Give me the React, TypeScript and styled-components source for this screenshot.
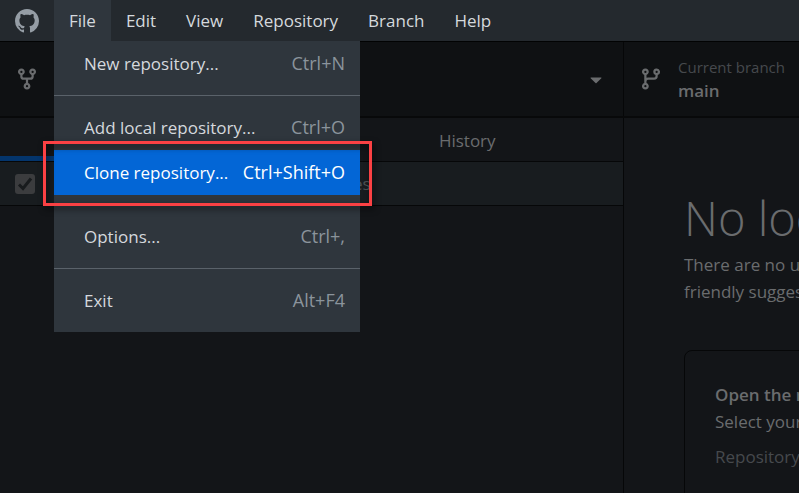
import React from "react";
import styled, { createGlobalStyle } from "styled-components";

const GlobalStyle = createGlobalStyle`
  *, *::before, *::after { box-sizing: border-box; }
  html, body, #root { height: 100%; margin: 0; }
  body {
    background: #131518;
    color: #6a6c6e;
    font: 17px/27px "Open Sans", "Noto Sans", sans-serif;
    overflow: hidden;
  }
  button { font: inherit; color: inherit; border: 0; padding: 0; background: none; text-align: left; }
`;

const Page = styled.div`
  height: 100%;
  display: flex;
  flex-direction: column;
`;

const MenuBar = styled.nav`
  display: flex;
  height: 41px;
  flex: none;
  background: #24292e;
  color: #d5d9dd;
`;

const Logo = styled.div`
  display: flex;
  align-items: center;
  padding: 0 15px;
  color: #959da5;
`;

const MenuSlot = styled.div`
  position: relative;
  display: flex;
`;

const MenuTitle = styled.button<{ $open?: boolean }>`
  padding: 0 15px;
  white-space: nowrap;
  background: ${(p) => (p.$open ? "#2f363d" : "transparent")};
`;

const DropDown = styled.div`
  position: absolute;
  top: 100%;
  left: 0;
  z-index: 2;
  width: 306px;
  padding-bottom: 9px;
  display: flex;
  flex-direction: column;
  background: #2f363d;
`;

const MenuItem = styled.button<{ $selected?: boolean }>`
  position: relative;
  display: flex;
  justify-content: space-between;
  align-items: center;
  height: 45px;
  padding: 0 15px 0 30px;
  white-space: nowrap;
  color: ${(p) => (p.$selected ? "#ffffff" : "#d5d9dd")};
  background: ${(p) => (p.$selected ? "#0366d6" : "transparent")};
`;

const Shortcut = styled.span<{ $selected?: boolean }>`
  font-size: 18px;
  color: ${(p) => (p.$selected ? "#ffffff" : "#8b949c")};
`;

const Separator = styled.hr`
  width: 100%;
  height: 1px;
  margin: 9px 0;
  border: 0;
  background: #5a626a;
`;

const Callout = styled.span`
  position: absolute;
  inset: -9px -12px -11px -11px;
  border: 3px solid #fb4144;
  filter: drop-shadow(2px 3px 3px rgba(0, 0, 0, 0.6));
  pointer-events: none;
`;

const Toolbar = styled.header`
  display: flex;
  height: 77px;
  flex: none;
  background: #0f1113;
  border-top: 1px solid #020303;
  border-bottom: 2px solid #08090a;
`;

const RepositoryButton = styled.button`
  width: 624px;
  flex: none;
  display: flex;
  align-items: center;
  justify-content: space-between;
  padding: 0 15px;
  border-right: 1px solid #060708;
`;

const BranchButton = styled.button`
  flex: 1;
  display: flex;
  align-items: center;
  gap: 15px;
  padding: 0 15px;
  white-space: nowrap;
`;

const BranchText = styled.span`
  display: flex;
  flex-direction: column;
  line-height: 23px;
`;

const Caption = styled.span`
  font-size: 15px;
  color: #46494d;
`;

const Strong = styled.strong`
  font-weight: 600;
`;

const Body = styled.div`
  flex: 1;
  min-height: 0;
  display: flex;
`;

const Sidebar = styled.aside`
  width: 624px;
  flex: none;
  border-right: 1px solid #060708;
`;

const Tabs = styled.div`
  display: grid;
  grid-template-columns: 1fr 1fr;
  height: 44px;
  border-bottom: 1px solid #060708;
`;

const Tab = styled.button<{ $active?: boolean }>`
  padding-top: 2px;
  text-align: center;
  box-shadow: ${(p) => (p.$active ? "inset 0 -5px #04356c" : "none")};
`;

const ChangesHeader = styled.div`
  display: grid;
  grid-template-columns: 20px 1fr 20px;
  align-items: center;
  height: 44px;
  padding: 0 15px;
  background: #181c1f;
  border-bottom: 1px solid #060708;
`;

const CheckBox = styled.div`
  display: grid;
  > * { grid-area: 1 / 1; }
  svg { pointer-events: none; }
`;

const CheckInput = styled.input`
  appearance: none;
  width: 20px;
  height: 20px;
  margin: 0;
  border-radius: 3px;
  background: #3b3c3e;
`;

const ChangesLabel = styled.label`
  text-align: center;
  color: #4e5154;
`;

const Main = styled.main`
  flex: 1;
  min-width: 0;
  overflow: hidden;
  padding: 68px 0 0 60px;
  white-space: nowrap;
`;

const Heading = styled.h1`
  margin: 0;
  font-size: 47px;
  line-height: 65px;
  font-weight: 300;
`;

const Intro = styled.p`
  margin: 0;
`;

const Card = styled.section`
  width: 760px;
  margin-top: 45px;
  padding: 30px;
  border: 1px solid #060708;
  border-radius: 8px;
`;

const CardLine = styled.p<{ $muted?: boolean }>`
  margin: ${(p) => (p.$muted ? "8px 0 0" : "0")};
  color: ${(p) => (p.$muted ? "#46494d" : "inherit")};
`;

const paths = {
  github:
    "M8 0c4.42 0 8 3.58 8 8a8.013 8.013 0 0 1-5.45 7.59c-.4.08-.55-.17-.55-.38 0-.27.01-1.13.01-2.2 0-.75-.25-1.23-.54-1.48 1.78-.2 3.65-.88 3.65-3.95 0-.88-.31-1.59-.82-2.15.08-.2.36-1.02-.08-2.12 0 0-.67-.22-2.2.82-.64-.18-1.32-.27-2-.27-.68 0-1.36.09-2 .27-1.53-1.03-2.2-.82-2.2-.82-.44 1.1-.16 1.92-.08 2.12-.51.56-.82 1.28-.82 2.15 0 3.06 1.86 3.75 3.64 3.95-.23.2-.44.55-.51 1.07-.46.21-1.61.55-2.33-.66-.15-.24-.6-.83-1.23-.82-.67.01-.27.38.01.53.34.19.73.9.82 1.13.16.45.68 1.31 2.69.94 0 .67.01 1.3.01 1.49 0 .21-.15.45-.55.38A7.995 7.995 0 0 1 0 8c0-4.42 3.58-8 8-8Z",
  fork:
    "M5 5.372v.878c0 .414.336.75.75.75h4.5a.75.75 0 0 0 .75-.75v-.878a2.25 2.25 0 1 1 1.5 0v.878a2.25 2.25 0 0 1-2.25 2.25h-1.5v2.128a2.251 2.251 0 1 1-1.5 0V8.5h-1.5A2.25 2.25 0 0 1 3.5 6.25v-.878a2.25 2.25 0 1 1 1.5 0ZM5 3.25a.75.75 0 1 0-1.5 0 .75.75 0 0 0 1.5 0Zm6.75.75a.75.75 0 1 0 0-1.5.75.75 0 0 0 0 1.5Zm-3 8.75a.75.75 0 1 0-1.5 0 .75.75 0 0 0 1.5 0Z",
  branch:
    "M9.5 3.25a2.25 2.25 0 1 1 3 2.122V6A2.5 2.5 0 0 1 10 8.5H6a1 1 0 0 0-1 1v1.128a2.251 2.251 0 1 1-1.5 0V5.372a2.25 2.25 0 1 1 1.5 0v1.836A2.493 2.493 0 0 1 6 7h4a1 1 0 0 0 1-1v-.628A2.25 2.25 0 0 1 9.5 3.25Zm-6 0a.75.75 0 1 0 1.5 0 .75.75 0 0 0-1.5 0Zm8.25-.75a.75.75 0 1 0 0 1.5.75.75 0 0 0 0-1.5ZM4.25 12a.75.75 0 1 0 0 1.5.75.75 0 0 0 0-1.5Z",
  triangle:
    "m4.427 7.427 3.396 3.396a.25.25 0 0 0 .354 0l3.396-3.396A.25.25 0 0 0 11.396 7H4.604a.25.25 0 0 0-.177.427Z",
};

const Icon = ({ name }: { name: keyof typeof paths }) => (
  <svg width="24" height="24" viewBox="0 0 16 16" fill="currentColor" aria-hidden="true">
    <path d={paths[name]} />
  </svg>
);

type Entry = { label: string; keys: string; selected?: boolean };

const fileMenu: Entry[][] = [
  [{ label: "New repository...", keys: "Ctrl+N" }],
  [
    { label: "Add local repository...", keys: "Ctrl+O" },
    { label: "Clone repository...", keys: "Ctrl+Shift+O", selected: true },
  ],
  [{ label: "Options...", keys: "Ctrl+," }],
  [{ label: "Exit", keys: "Alt+F4" }],
];

const otherMenus = ["Edit", "View", "Repository", "Branch", "Help"];

export default function App() {
  return (
    <Page>
      <GlobalStyle />
      <MenuBar>
        <Logo>
          <Icon name="github" />
        </Logo>
        <MenuSlot>
          <MenuTitle $open aria-expanded="true">File</MenuTitle>
          <DropDown role="menu">
            {fileMenu.map((group, i) => (
              <React.Fragment key={i}>
                {i > 0 && <Separator />}
                {group.map((entry) => (
                  <MenuItem key={entry.label} role="menuitem" $selected={entry.selected}>
                    <span>{entry.label}</span>
                    <Shortcut $selected={entry.selected}>{entry.keys}</Shortcut>
                    {entry.selected && <Callout />}
                  </MenuItem>
                ))}
              </React.Fragment>
            ))}
          </DropDown>
        </MenuSlot>
        {otherMenus.map((title) => (
          <MenuTitle key={title}>{title}</MenuTitle>
        ))}
      </MenuBar>
      <Toolbar>
        <RepositoryButton aria-label="Current repository">
          <Icon name="fork" />
          <Icon name="triangle" />
        </RepositoryButton>
        <BranchButton>
          <Icon name="branch" />
          <BranchText>
            <Caption>Current branch</Caption>
            <Strong>main</Strong>
          </BranchText>
        </BranchButton>
      </Toolbar>
      <Body>
        <Sidebar>
          <Tabs role="tablist">
            <Tab role="tab" aria-selected="true" aria-label="Changes" $active />
            <Tab role="tab" aria-selected="false">History</Tab>
          </Tabs>
          <ChangesHeader>
            <CheckBox>
              <CheckInput type="checkbox" id="all-changes" defaultChecked />
              <svg width="20" height="20" viewBox="0 0 20 20" fill="none" stroke="#181b1d" strokeWidth="3" aria-hidden="true">
                <path d="M4 10.5 8 14.5 16 4.5" />
              </svg>
            </CheckBox>
            <ChangesLabel htmlFor="all-changes">0 changed files</ChangesLabel>
          </ChangesHeader>
        </Sidebar>
        <Main>
          <Heading>No local changes</Heading>
          <Intro>
            There are no uncommitted changes in this repository. Here are some
            <br />
            friendly suggestions for what to do next.
          </Intro>
          <Card>
            <CardLine>
              <Strong>Open the repository in your external editor</Strong>
            </CardLine>
            <CardLine>Select your editor in Options</CardLine>
            <CardLine $muted>Repository menu or Ctrl Shift A</CardLine>
          </Card>
        </Main>
      </Body>
    </Page>
  );
}
